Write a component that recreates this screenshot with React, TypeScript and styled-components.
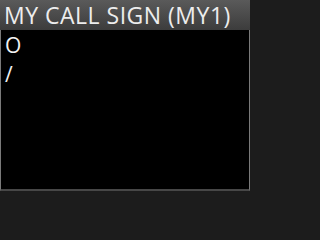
import React from "react";
import styled, { createGlobalStyle } from "styled-components";

const GlobalStyle = createGlobalStyle`
  html, body {
    margin: 0;
    padding: 0;
    background: #1c1c1c;
  }
  body {
    font-family: "Open Sans", "Noto Sans", sans-serif;
  }
`;

const Screen = styled.div`
  width: 250px;
  height: 219px;
  display: flex;
  flex-direction: column;
  background: #1c1c1c;
  overflow: hidden;
`;

const TitleBar = styled.div`
  height: 30px;
  flex: none;
  display: flex;
  align-items: center;
  padding-left: 4px;
  background: linear-gradient(#5a5a5a, #3c3c3c);
  color: #ededed;
  font-size: 23px;
  letter-spacing: 0.5px;
  white-space: nowrap;
`;

const Panel = styled.div`
  height: 158px;
  flex: none;
  background: #000;
  border-left: 1px solid #7a7a7a;
  border-right: 1px solid #7a7a7a;
  border-bottom: 2px solid #474747;
  padding: 1px 0 0 4px;
  display: flex;
  flex-direction: column;
`;

const Line = styled.div`
  height: 29px;
  color: #f2f2f2;
  font-size: 21px;
  line-height: 29px;
`;

const Footer = styled.div`
  flex: 1;
  background: #1c1c1c;
`;

export default function App() {
  const lines = ["O", "/"];
  return (
    <>
      <GlobalStyle />
      <Screen>
        <TitleBar>MY CALL SIGN (MY1)</TitleBar>
        <Panel>
          {lines.map((l, i) => (
            <Line key={i}>{l}</Line>
          ))}
        </Panel>
        <Footer />
      </Screen>
    </>
  );
}
